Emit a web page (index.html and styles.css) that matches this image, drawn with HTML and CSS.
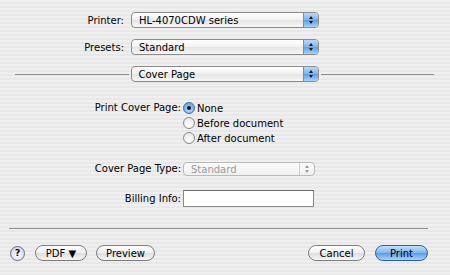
FILE: index.html
```html
<!DOCTYPE html>
<html lang="en">
<head>
    <meta charset="UTF-8">
    <title>Print</title>
    <link rel="stylesheet" href="styles.css">
</head>
<body>
<div class="sheet">

  <div class="row first">
    <span class="lbl">Printer:</span>
    <div class="popup"><span>HL-4070CDW series</span><i class="cap"><b class="up"></b><b class="dn"></b></i></div>
  </div>
  <div class="row">
    <span class="lbl">Presets:</span>
    <div class="popup"><span>Standard</span><i class="cap"><b class="up"></b><b class="dn"></b></i></div>
  </div>
  <div class="row pane">
    <span class="line"></span>
    <div class="popup"><span>Cover Page</span><i class="cap"><b class="up"></b><b class="dn"></b></i></div>
    <span class="line r"></span>
  </div>

  <div class="opts">
    <span class="lbl2">Print Cover Page:</span>
    <div class="radios">
      <label class="radio on"><i></i>None</label>
      <label class="radio"><i></i>Before document</label>
      <label class="radio"><i></i>After document</label>
    </div>
  </div>

  <div class="row2 type">
    <span class="lbl2">Cover Page Type:</span>
    <div class="popup off"><span>Standard</span><i class="cap"><b class="up"></b><b class="dn"></b></i></div>
  </div>
  <div class="row2 bill">
    <span class="lbl2">Billing Info:</span>
    <input type="text" class="field">
  </div>

  <div class="sep"></div>

  <div class="bar">
    <span class="help">?</span>
    <button class="btn pdf">PDF &#9660;</button>
    <button class="btn prev">Preview</button>
    <span class="grow"></span>
    <button class="btn cancel">Cancel</button>
    <button class="btn print">Print</button>
  </div>

</div>
</body>
</html>
```

FILE: styles.css
```css
*{
  box-sizing: border-box;
}

body {
  margin: 0;
  width: 450px;
  height: 275px;
  font-family: "DejaVu Sans", "Liberation Sans", sans-serif;
  font-size: 10px;
  color: #000;
  background: repeating-linear-gradient(#efefef 0 2px, #e8e8e8 2px 4px);
  overflow: hidden;
}

.sheet {
  padding-top: 12px;
}

.row {
  display: flex;
  align-items: center;
  height: 16px;
  margin-bottom: 11px;
}

.lbl {
  width: 124px;
  text-align: right;
  margin-right: 7px;
}

.popup {
  width: 188px;
  height: 16px;
  display: flex;
  align-items: center;
  border: 1px solid #8c8c8c;
  border-radius: 4px;
  background: linear-gradient(#ffffff, #f1f1f1 50%, #e4e4e4 51%, #f7f7f7);
  padding-left: 7px;
  overflow: hidden;
}

.popup span {
  flex: 1;
}

.cap {
  width: 15px;
  height: 100%;
  background: linear-gradient(#b9d8f7, #7cb2ec 50%, #5d9ce5 51%, #a9d2fb);
  border-left: 1px solid #6f8fb8;
  display: flex;
  flex-direction: column;
  align-items: center;
  justify-content: center;
  gap: 2px;
}

.cap b {
  width: 0;
  height: 0;
  border-left: 2.5px solid transparent;
  border-right: 2.5px solid transparent;
}

.cap .up {
  border-bottom: 3px solid #1a1a1a;
}

.cap .dn {
  border-top: 3px solid #1a1a1a;
}

.pane {
  margin-bottom: 0;
}

.line {
  height: 1px;
  background: #8f8f8f;
  margin-left: 15px;
  margin-right: 2px;
  flex: 1;
}

.line.r {
  margin-left: 2px;
  margin-right: 16px;
}

.pane .popup {
  flex: none;
}

.opts {
  display: flex;
  margin-top: 19px;
}

.lbl2 {
  width: 181px;
  text-align: right;
  margin-right: 2px;
  line-height: 14px;
}

.radios {
  display: flex;
  flex-direction: column;
  gap: 1px;
}

.radio {
  display: flex;
  align-items: center;
  height: 14px;
}

.radio i {
  width: 12px;
  height: 12px;
  border-radius: 50%;
  border: 1px solid #8a8a8a;
  background: radial-gradient(circle at 50% 70%, #ffffff, #e2e2e2);
  margin-right: 2px;
  display: flex;
  align-items: center;
  justify-content: center;
}

.radio.on i {
  background: radial-gradient(circle at 50% 65%, #c4e0fb, #6aa6e8 70%);
  border-color: #4b6f9c;
}

.radio.on i::after {
  content: "";
  width: 4px;
  height: 4px;
  border-radius: 50%;
  background: #111;
}

.row2 {
  display: flex;
  align-items: center;
}

.type {
  margin-top: 17px;
  height: 14px;
}

.popup.off {
  width: 132px;
  height: 14px;
  color: #9a9a9a;
  border-color: #b9b9b9;
  background: linear-gradient(#fbfbfb, #f0f0f0);
}

.popup.off .cap {
  background: none;
  border-left: 1px solid #cfcfcf;
}

.popup.off .cap .up {
  border-bottom-color: #999;
}

.popup.off .cap .dn {
  border-top-color: #999;
}

.bill {
  margin-top: 14px;
}

.field {
  width: 131px;
  height: 17px;
  margin: 0;
  border: 1px solid #8a8a8a;
  border-top-color: #6a6a6a;
  background: #fff;
  padding: 0 3px;
}

.sep {
  height: 1px;
  background: #8f8f8f;
  margin: 21px 22px 0 9px;
}

.bar {
  display: flex;
  align-items: center;
  margin-top: 16px;
  padding-left: 10px;
  height: 16px;
}

.help {
  width: 15px;
  height: 15px;
  border-radius: 50%;
  border: 1px solid #6e6e80;
  background: radial-gradient(circle at 50% 65%, #ffffff, #c6c6e6);
  font-weight: bold;
  font-size: 9px;
  display: flex;
  align-items: center;
  justify-content: center;
  margin-right: 10px;
}

.btn {
  font-family: "DejaVu Sans", "Liberation Sans", sans-serif;
  font-size: 10px;
  height: 16px;
  padding: 0;
  border: 1px solid #7d7d7d;
  border-radius: 8px;
  background: linear-gradient(#ffffff, #f0f0f0 50%, #dedede 51%, #f6f6f6);
  color: #000;
}

.pdf {
  width: 52px;
  margin-right: 9px;
}

.prev {
  width: 59px;
}

.grow {
  flex: 1;
}

.cancel {
  width: 57px;
  margin-right: 10px;
}

.print {
  width: 53px;
  margin-right: 22px;
  border-color: #2d5fa0;
  background: linear-gradient(#c5e1fb, #7db4ee 50%, #5a9ae6 51%, #a8d4fd);
}
```
